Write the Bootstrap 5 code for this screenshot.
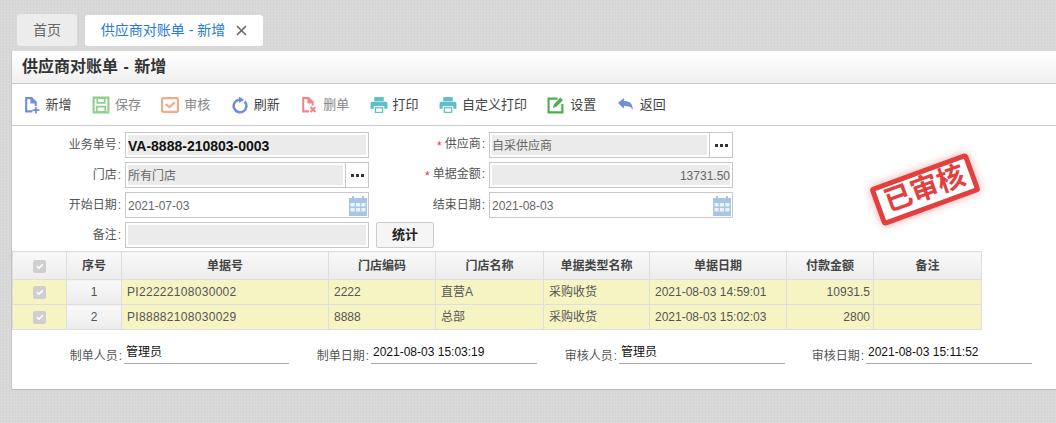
<!DOCTYPE html>
<html lang="zh-CN">
<head>
  <meta charset="UTF-8" />
  <title>供应商对账单 - 新增</title>
  <link href="https://cdn.jsdelivr.net/npm/bootstrap@5.3.0/dist/css/bootstrap.min.css" rel="stylesheet" />
  <style>
    html, body {
      height: 423px;
      overflow: hidden;
    }
    body {
      font-family: "Liberation Sans", "Noto Sans CJK SC", sans-serif;
      font-size: 12px;
      color: #555;
      background-color: #d8d8d8;
      background-image:
        repeating-linear-gradient(0deg, rgba(255,255,255,.07) 0 1px, transparent 1px 3px),
        repeating-linear-gradient(90deg, rgba(0,0,0,.02) 0 1px, transparent 1px 3px);
      padding: 14px 0 0 12px;
    }
    .tab-strip {
      height: 37px;
      padding-left: 5px;
      gap: 8px;
    }
    .tab-item {
      height: 32px;
      border-radius: 3px;
      font-size: 14px;
      color: #666;
      background: #ececec;
      width: 60px;
    }
    .tab-item.on {
      margin-top: 1px;
      height: 31px;
      width: 178px;
      background: #fff;
      color: #2a7bd3;
      gap: 11px;
    }
    .tab-x {
      width: 11px;
      height: 11px;
    }
    .sheet {
      position: relative;
      height: 339px;
      background: #fff;
      border-bottom: 1px solid #bbb;
      box-shadow: -1px 0 0 #c4c4c4;
    }
    .sheet-head {
      height: 33px;
      padding-left: 10px;
      font-size: 16px;
      font-weight: 700;
      line-height: 32px;
      word-spacing: 1px;
      color: #333;
      background: linear-gradient(#fff, #efefef);
      border-bottom: 1px solid #ccc;
    }
    .tools {
      height: 42px;
      padding-left: 10.5px;
      border-bottom: 1px solid #ccc;
      font-size: 13px;
      gap: 20.4px;
    }
    .tool {
      gap: 5px;
      color: #444;
    }
    .tool.off {
      color: #888;
    }
    .tool svg {
      width: 18px;
      height: 18px;
    }
    .fields {
      display: grid;
      grid-template-columns: 110px 245px 119px 245px 64px;
      grid-auto-rows: 26px;
      row-gap: 4px;
      padding-top: 6px;
      align-items: center;
    }
    .lab {
      text-align: right;
      padding-right: 1px;
      white-space: nowrap;
      color: #555;
    }
    .lab i {
      color: #e33;
      font-style: normal;
      margin-right: 3px;
      vertical-align: -2px;
    }
    .lab::after {
      content: ":";
      margin-left: 1px;
    }
    .box {
      height: 26px;
      border: 1px solid #c8c8c8;
      background: #fff;
      padding: 2px;
      margin-left: 3px;
      display: flex;
      align-items: stretch;
      width: 244px;
    }
    .box-fill {
      flex: 1;
      background: #ebebeb;
      line-height: 22px;
      color: #666;
      min-width: 0;
    }
    .box-fill.strong {
      font-size: 14px;
      font-weight: 700;
      color: #111;
    }
    .box-fill.money {
      text-align: right;
    }
    .box-plain {
      flex: 1;
      line-height: 22px;
      color: #666;
    }
    .dots {
      width: 23px;
      margin: -2px -2px -2px 2px;
      border: 0;
      border-left: 1px solid #c8c8c8;
      background: #fff;
      padding: 0;
      line-height: 0;
    }
    .dots svg {
      width: 13px;
      height: 3px;
    }
    .cal {
      width: 18px;
      height: 22px;
      margin-right: -1px;
    }
    .sum-btn {
      width: 58px;
      height: 26px;
      margin-left: 9px;
      padding: 0;
      font-size: 13px;
      font-weight: 700;
      color: #222;
      background: #f5f5f5;
      border: 1px solid #ccc;
      border-radius: 2px;
    }
    .grid-wrap {
      width: 969px;
      margin-top: 3px;
    }
    .bill {
      table-layout: fixed;
      width: 969px;
      margin: 0;
      font-size: 12px;
      color: #555;
    }
    .bill th, .bill td {
      padding: 0 5px;
      border: 1px solid #dedede;
      vertical-align: middle;
      white-space: nowrap;
    }
    .bill th {
      height: 28px;
      text-align: center;
      font-weight: 700;
      color: #444;
      background: linear-gradient(#f9f9f9, #ececec);
    }
    .bill td {
      height: 25px;
      background: #f6f4c3;
      color: #555;
    }
    .bill td.num {
      text-align: center;
      background: linear-gradient(#f9f9f9, #ececec);
    }
    .bill td.doc {
      letter-spacing: .3px;
    }
    .bill td.amt {
      text-align: right;
      padding-right: 3px;
    }
    .bill .ck {
      padding: 0;
      text-align: center;
    }
    .bill .form-check-input {
      width: 13px;
      height: 13px;
      margin: 3px 0 0;
      border-radius: 2px;
      background-color: #cfcfcf;
      border-color: #cfcfcf;
      opacity: 1;
    }
    .sign-row {
      padding-top: 14px;
    }
    .sign-lab {
      white-space: nowrap;
      text-align: right;
      color: #555;
      padding-top: 3px;
    }
    .sign-lab::after {
      content: ":";
      margin-left: 1px;
    }
    .sign-val {
      height: 20px;
      margin-left: 2px;
      padding-left: 2px;
      line-height: 16px;
      color: #111;
      border-bottom: 1px solid #aaa;
    }
    .stamp {
      position: absolute;
      left: 861px;
      top: 118px;
      width: 104px;
      height: 41px;
      transform: rotate(-20deg);
      border: 5px solid #e23f3f;
      border-radius: 4px;
      box-shadow: 0 0 8px rgba(230,60,60,.45);
      background: #fff;
      color: #e23f3f;
      font-size: 28px;
      font-weight: 700;
      line-height: 30px;
      text-align: center;
      white-space: nowrap;
    }
  </style>
</head>
<body>
  <!-- tabs -->
  <div class="tab-strip d-flex">
    <div class="tab-item d-flex align-items-center justify-content-center">首页</div>
    <div class="tab-item on d-flex align-items-center justify-content-center">
      <span>供应商对账单 - 新增</span>
      <svg class="tab-x" viewBox="0 0 11 11"><path d="M1 1l9 9M10 1l-9 9" stroke="#666" stroke-width="1.6" fill="none"/></svg>
    </div>
  </div>

  <div class="sheet">
    <div class="sheet-head">供应商对账单 - 新增</div>

    <div class="tools d-flex align-items-center">
      <span class="tool d-flex align-items-center">
        <svg viewBox="0 0 17 17"><path d="M2 1h6.500l4.500 4.500v4h-2v-2.500h-4v-4h-3v10.500h5v2h-7z" fill="#6f8fd8"/><path d="M13 10.500v2h2.500v1.700h-2.500v2.300h-1.700v-2.300h-2.300v-1.700h2.300v-2z" fill="#6f8fd8"/></svg>
        新增
      </span>
      <span class="tool off d-flex align-items-center">
        <svg viewBox="0 0 17 17"><path d="M1.500 1.500h14v14h-14z" fill="none" stroke="#8fcf8f" stroke-width="2"/><path d="M5 2h7v4.500h-7zM4.500 10h8v5h-8z" fill="none" stroke="#8fcf8f" stroke-width="1.600"/></svg>
        保存
      </span>
      <span class="tool off d-flex align-items-center">
        <svg viewBox="0 0 17 17"><rect x="1" y="2" width="15" height="13" rx="1" fill="none" stroke="#f3aa85" stroke-width="2"/><path d="M4.500 7.500l3.500 3 5-4.500" fill="none" stroke="#f3aa85" stroke-width="2"/></svg>
        审核
      </span>
      <span class="tool d-flex align-items-center">
        <svg viewBox="0 0 17 17"><path d="M12.800 5.200a6 6 0 1 1-5.300-1.700" fill="none" stroke="#6f8fd8" stroke-width="2.400"/><path d="M7.500 0.500l5 3-5 3z" fill="#6f8fd8"/></svg>
        刷新
      </span>
      <span class="tool off d-flex align-items-center">
        <svg viewBox="0 0 17 17"><path d="M2 1h6.500l4.500 4.500v3.500h-2v-2h-4v-4h-3v10.500h4.500v2h-6.500z" fill="#f0868a"/><path d="M10 10.500l4.500 4.500M14.500 10.500l-4.500 4.500" stroke="#f0868a" stroke-width="2"/></svg>
        删单
      </span>
      <span class="tool d-flex align-items-center">
        <svg viewBox="0 0 17 17"><path d="M4 1h9v4h-9z" fill="#5cbfc9"/><path d="M2 5.500h13a1.500 1.500 0 0 1 1.500 1.500v5h-3v-2.500h-10v2.500h-3v-5a1.500 1.500 0 0 1 1.500-1.500z" fill="#5cbfc9"/><path d="M4.500 10.500h8v5.500h-8z" fill="#5cbfc9"/><path d="M5.700 11.700h5.600v3.200h-5.600z" fill="#fff"/></svg>
        打印
      </span>
      <span class="tool d-flex align-items-center">
        <svg viewBox="0 0 17 17"><path d="M4 1h9v4h-9z" fill="#5cbfc9"/><path d="M2 5.500h13a1.500 1.500 0 0 1 1.500 1.500v5h-3v-2.500h-10v2.500h-3v-5a1.500 1.500 0 0 1 1.500-1.500z" fill="#5cbfc9"/><path d="M4.500 10.500h8v5.500h-8z" fill="#5cbfc9"/><path d="M5.700 11.700h5.600v3.200h-5.600z" fill="#fff"/></svg>
        自定义打印
      </span>
      <span class="tool d-flex align-items-center">
        <svg viewBox="0 0 17 17"><path d="M10 2.500h-8.500v13h13v-8" fill="none" stroke="#4cae4c" stroke-width="2"/><path d="M5.500 11.500l1-3.500 6-6.500 2.500 2.500-6 6z" fill="#4cae4c"/></svg>
        设置
      </span>
      <span class="tool d-flex align-items-center">
        <svg viewBox="0 0 17 17"><path d="M1 6.500l5.500-4.500v2.800c4.500 0 8.500 1.700 8.500 8.700-1.500-3.300-4-4-8.500-4v2.500z" fill="#6f8fd8"/></svg>
        返回
      </span>
    </div>

    <!-- form -->
    <div class="fields">
      <div class="lab">业务单号</div>
      <div class="box"><div class="box-fill strong">VA-8888-210803-0003</div></div>
      <div class="lab"><i>*</i>供应商</div>
      <div class="box"><div class="box-fill">自采供应商</div><button class="dots" type="button"><svg viewBox="0 0 13 3"><path d="M0 0h3v3h-3zM5 0h3v3h-3zM10 0h3v3h-3z" fill="#333"/></svg></button></div>
      <div></div>

      <div class="lab">门店</div>
      <div class="box"><div class="box-fill">所有门店</div><button class="dots" type="button"><svg viewBox="0 0 13 3"><path d="M0 0h3v3h-3zM5 0h3v3h-3zM10 0h3v3h-3z" fill="#333"/></svg></button></div>
      <div class="lab"><i>*</i>单据金额</div>
      <div class="box"><div class="box-fill money">13731.50</div></div>
      <div></div>

      <div class="lab">开始日期</div>
      <div class="box"><div class="box-plain">2021-07-03</div>
        <svg class="cal" viewBox="0 0 18 22"><path d="M0 3h3v-2h2v2h8v-2h2v2h3v18h-18z" fill="#a8c6e4"/><path d="M1.500 8h4.200v3.500h-4.200zM6.900 8h4.200v3.500h-4.200zM12.300 8h4.200v3.500h-4.200zM1.500 13h4.200v3.500h-4.200zM6.900 13h4.200v3.500h-4.200zM12.300 13h4.200v3.500h-4.200z" fill="#eaf2fa"/></svg>
      </div>
      <div class="lab">结束日期</div>
      <div class="box"><div class="box-plain">2021-08-03</div>
        <svg class="cal" viewBox="0 0 18 22"><path d="M0 3h3v-2h2v2h8v-2h2v2h3v18h-18z" fill="#a8c6e4"/><path d="M1.500 8h4.200v3.500h-4.200zM6.900 8h4.200v3.500h-4.200zM12.300 8h4.200v3.500h-4.200zM1.500 13h4.200v3.500h-4.200zM6.900 13h4.200v3.500h-4.200zM12.300 13h4.200v3.500h-4.200z" fill="#eaf2fa"/></svg>
      </div>
      <div></div>

      <div class="lab">备注</div>
      <div class="box"><div class="box-fill"></div></div>
      <div><button class="btn sum-btn" type="button">统计</button></div>
    </div>

    <!-- grid -->
    <div class="grid-wrap">
      <table class="table bill">
        <colgroup>
          <col style="width:54px"><col style="width:55px"><col style="width:207px"><col style="width:107px"><col style="width:108px"><col style="width:106px"><col style="width:137px"><col style="width:87px"><col style="width:108px">
        </colgroup>
        <thead>
          <tr>
            <th class="ck"><input class="form-check-input" type="checkbox" checked disabled></th>
            <th>序号</th><th>单据号</th><th>门店编码</th><th>门店名称</th><th>单据类型名称</th><th>单据日期</th><th>付款金额</th><th>备注</th>
          </tr>
        </thead>
        <tbody>
          <tr>
            <td class="ck"><input class="form-check-input" type="checkbox" checked disabled></td>
            <td class="num">1</td><td class="doc">PI22222108030002</td><td>2222</td><td>直营A</td><td>采购收货</td><td>2021-08-03 14:59:01</td><td class="amt">10931.5</td><td></td>
          </tr>
          <tr>
            <td class="ck"><input class="form-check-input" type="checkbox" checked disabled></td>
            <td class="num">2</td><td class="doc">PI88882108030029</td><td>8888</td><td>总部</td><td>采购收货</td><td>2021-08-03 15:02:03</td><td class="amt">2800</td><td></td>
          </tr>
        </tbody>
      </table>
    </div>

    <!-- footer -->
    <div class="sign-row d-flex">
      <div class="sign-lab" style="width:110px">制单人员</div><div class="sign-val" style="width:165px">管理员</div>
      <div class="sign-lab" style="width:80px">制单日期</div><div class="sign-val" style="width:166px">2021-08-03 15:03:19</div>
      <div class="sign-lab" style="width:80px">审核人员</div><div class="sign-val" style="width:166px">管理员</div>
      <div class="sign-lab" style="width:79px">审核日期</div><div class="sign-val" style="width:166px">2021-08-03 15:11:52</div>
    </div>

    <div class="stamp">已审核</div>
  </div>
  <script src="https://cdn.jsdelivr.net/npm/bootstrap@5.3.0/dist/js/bootstrap.bundle.min.js"></script>
</body>
</html>
